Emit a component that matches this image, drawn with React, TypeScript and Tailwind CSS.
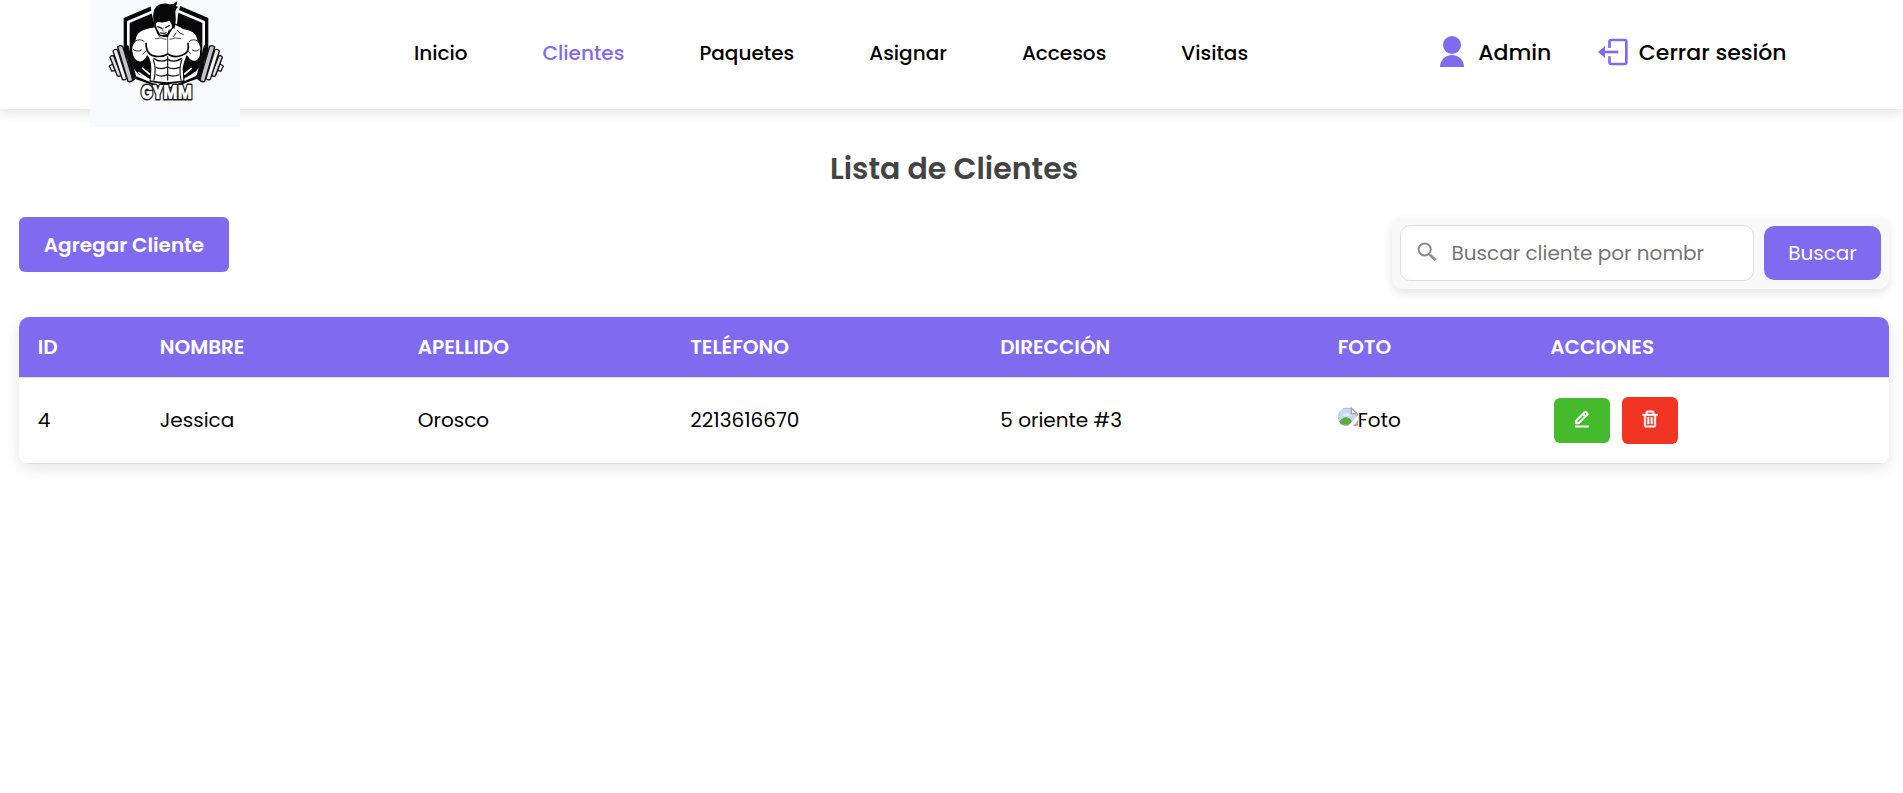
import type { ReactNode } from "react";
import { BiEditAlt, BiTrash } from "react-icons/bi";

function Logo() {
  return (
    <svg viewBox="30 0 450 381" className="block h-[127px] w-[150px] bg-[#f9fafe]" role="img" aria-label="GYMM">
      <g strokeLinejoin="round" strokeLinecap="round">
        {/* shield */}
        <path d="M131 54 L258 0 L385 54 V190 L352 236 L258 270 L164 236 L131 190 Z" fill="#080808" />
        <path d="M145 66 L258 18 L371 66 V190 L344 226 L258 262 L172 226 L145 190 Z" fill="none" stroke="#fbfbff" strokeWidth="8" />
        <path d="M208 -4 H306 L294 44 L290 82 L226 84 L216 44 Z" fill="#f9fafe" />
        {/* left barbell plates */}
        <g stroke="#111" strokeWidth="4">
          <path d="M88 198 L98 192 L106 212 L95 213 Z" fill="#fff" />
          <path d="M90 172 Q92 165 101 168 L124 224 Q120 231 112 228 Z" fill="#ddd" />
          <path d="M99 153 Q103 146 112 149 L140 235 Q135 242 127 238 Z" fill="#f4f4f4" />
          <path d="M113 141 Q119 134 128 139 L159 240 Q153 248 144 244 Z" fill="#c4c4c8" />
          <path d="M135 139 Q138 133 144 139 L167 232 Q163 242 158 239 Z" fill="#0b0b0b" />
        </g>
        {/* right barbell plates */}
        <g stroke="#111" strokeWidth="4">
          <path d="M430 198 L420 192 L412 212 L423 213 Z" fill="#fff" />
          <path d="M427 172 Q425 165 416 168 L394 224 Q398 231 406 228 Z" fill="#ddd" />
          <path d="M418 153 Q414 146 405 149 L378 235 Q383 242 391 238 Z" fill="#f4f4f4" />
          <path d="M404 141 Q398 134 389 139 L359 240 Q365 248 374 244 Z" fill="#c4c4c8" />
          <path d="M382 139 Q379 133 373 139 L351 232 Q355 242 360 239 Z" fill="#0b0b0b" />
        </g>
        {/* torso and arms */}
        <path
          d="M226 80 Q208 82 190 88 Q166 96 164 124 Q150 142 156 158 Q158 182 180 187 Q195 184 202 168 Q212 184 212 206 L210 243 Q260 254 312 243 L310 206 Q314 184 321 168 Q330 186 346 184 Q364 178 362 154 Q366 140 355 124 Q352 98 330 90 Q308 86 294 76 L280 70 L262 110 L236 104 Z"
          fill="#fff"
          stroke="#090909"
          strokeWidth="4"
        />
        <path d="M202 168 L213 192 L211 225 L180 202 Q197 188 202 168 Z M321 168 L311 192 L313 225 L340 201 Q324 187 321 168 Z" fill="#090909" />
        {/* chest */}
        <path d="M198 130 Q198 160 218 167 Q246 174 263 162 Q282 175 306 166 Q330 158 324 130" fill="none" stroke="#080808" strokeWidth="5" />
        <path d="M263 112 V162 M226 116 Q242 110 258 118 M270 118 Q286 110 302 116" fill="none" stroke="#333" strokeWidth="2.5" />
        <path d="M164 124 Q180 114 192 124 M355 124 Q340 114 328 124 M160 148 Q170 158 184 150 M358 148 Q350 158 337 150 M190 162 L199 152 M332 162 L323 152" fill="none" stroke="#333" strokeWidth="3" />
        <path d="M292 92 Q298 100 310 104 M240 110 L232 99 M281 109 L288 99" fill="none" stroke="#222" strokeWidth="3" />
        {/* abdomen */}
        <path d="M222 176 Q242 190 263 178 Q282 190 304 176 M228 202 Q246 210 262 201 Q278 210 298 202 M230 225 Q246 232 262 224 Q278 232 296 225" fill="none" stroke="#111" strokeWidth="4" />
        <path d="M263 170 V240 M220 180 Q230 206 222 240 M305 180 Q296 206 303 240" fill="none" stroke="#161616" strokeWidth="3.5" />
        <path d="M176 218 L207 239 M188 205 L208 222 M345 218 L316 239 M334 205 L314 222" stroke="#fff" strokeWidth="5" />
        {/* head */}
        <path d="M224 58 Q223 86 241 106 Q256 110 268 98 L282 76 L280 50 Z" fill="#fff" stroke="#090909" strokeWidth="4" />
        <path d="M221 66 Q213 20 244 12 Q256 8 270 13 Q282 14 292 3 Q292 13 287 18 L295 20 Q286 26 286 35 Q290 60 284 86 L277 84 Q276 70 268 62 Q252 70 236 66 Q228 66 227 78 Z" fill="#080808" />
        <path d="M233 80 L246 85 M256 83 L269 76 M242 98 Q250 102 258 98 M268 90 L262 106 Q252 112 244 106" fill="none" stroke="#080808" strokeWidth="3.5" />
        <path d="M250 84 L247 92 L252 93" fill="none" stroke="#333" strokeWidth="2" />
      </g>
      <text
        x="183"
        y="298"
        textLength="153"
        lengthAdjust="spacingAndGlyphs"
        fill="#fff"
        stroke="#1b1b1b"
        strokeWidth="9"
        paintOrder="stroke"
        strokeLinejoin="round"
        className="font-['Poppins',sans-serif] text-[55px] font-extrabold"
      >
        GYMM
      </text>
    </svg>
  );
}

function UserIcon() {
  return (
    <svg viewBox="0 0 24 31" className="mb-[2px] h-[31px] w-6 fill-[#806af0]">
      <circle cx="12" cy="9" r="9" />
      <path d="M0 31a12 12 0 0 1 24 0Z" />
    </svg>
  );
}

function LogoutIcon() {
  return (
    <svg viewBox="595 56 90 84" className="h-7 w-[30px]">
      <path d="M629.5 86V67q0-5 5-5H675q5 0 5 5V129q0 5-5 5H634.5q-5 0-5-5V111" fill="none" stroke="#806af0" strokeWidth="8" />
      <path d="M610 98H656" stroke="#806af0" strokeWidth="8" />
      <path d="M595 98L616 80V116Z" fill="#806af0" />
    </svg>
  );
}

function SearchIcon() {
  return (
    <svg viewBox="0 0 20 20" className="mb-[3px] h-5 w-5" fill="none">
      <circle cx="7.7" cy="7.5" r="6.1" stroke="#8a8c8b" strokeWidth="2" />
      <path d="M11.8 11.8L14 14" stroke="#8a8c8b" strokeWidth="1.8" />
      <path d="M13.3 13.2L18.6 18.2" stroke="#929090" strokeWidth="2.8" />
    </svg>
  );
}

function BrokenImage() {
  return (
    <svg viewBox="0 0 60 60" className="mb-[6px] h-5 w-5 overflow-hidden rounded-[10px_0_0_10px]">
      <path d="M2 4H40L58 22V54H2Z" fill="#c3d9f7" />
      <path d="M2 54V4H40" fill="none" stroke="#c0c0c0" strokeWidth="4" />
      <path d="M12 27q1-8 9-7q7-6 12 1q7 2 4 7Z" fill="#dfeafb" />
      <path d="M2 54V46Q17 27 30 32Q40 34 46 54Z" fill="#58ad3b" />
      <path d="M2 54H58V22" fill="none" stroke="#a3a3a3" strokeWidth="4" />
      <path d="M27 60L60 25V39L41 60Z" fill="#fff" />
      <path d="M40 3V20H58Z" fill="#fff" stroke="#a3a3a3" strokeWidth="3.5" />
    </svg>
  );
}

const nav = ["Inicio", "Clientes", "Paquetes", "Asignar", "Accesos", "Visitas"];

const columns = [
  { label: "ID", width: "w-[122px]" },
  { label: "NOMBRE", width: "w-[258px]" },
  { label: "APELLIDO", width: "w-[272.5px]" },
  { label: "TELÉFONO", width: "w-[310px]" },
  { label: "DIRECCIÓN", width: "w-[337.5px]" },
  { label: "FOTO", width: "w-[212.5px]" },
  { label: "ACCIONES", width: "w-[357.5px]" },
];

function Cell({ children, className = "pb-[2px]" }: { children: ReactNode; className?: string }) {
  return <td className={`h-[86px] border-b border-[#ddd] pl-[18.75px] align-middle ${className}`}>{children}</td>;
}

export default function App() {
  return (
    <div className="min-h-[793px] w-full bg-white font-['Poppins','Inter',sans-serif] text-xl text-black">
      <header className="flex h-[109px] items-start bg-white pl-[90px] shadow-[0_5px_10px_rgba(0,0,0,0.1)]">
        <div className="relative z-10 shrink-0">
          <Logo />
        </div>
        <nav className="ml-[174px] flex h-[106px] items-center gap-[75px] font-medium">
          {nav.map((n) => (
            <a key={n} className={n === "Clientes" ? "text-[#806af0]" : ""}>
              {n}
            </a>
          ))}
        </nav>
        <div className="ml-[191.5px] flex h-[105px] items-center text-[22px] font-medium">
          <div className="flex items-center">
            <UserIcon />
            <span className="ml-[14.5px] pt-px">Admin</span>
          </div>
          <div className="ml-[47px] flex items-center">
            <LogoutIcon />
            <span className="ml-[10.5px] whitespace-nowrap pt-px">Cerrar sesión</span>
          </div>
        </div>
      </header>

      <main className="pl-[19px] pr-[14px]">
        <h1 className="mt-[29px] flex h-[61px] items-center justify-center text-[30px] font-semibold text-[#444]">
          Lista de Clientes
        </h1>

        <div className="mt-[18px] flex items-start justify-between">
          <button className="flex h-[55px] w-[210px] items-center justify-center rounded-md bg-[#806af0] font-semibold text-white">
            Agregar Cliente
          </button>
          <div className="flex h-[72px] w-[497px] items-center rounded-[10px] bg-[#f9f9f9] px-2 shadow-[0_4px_10px_rgba(0,0,0,0.1)]">
            <div className="flex h-14 w-[354px] items-center rounded-[10px] border border-[#ddd] bg-white pl-4 text-[#757575]">
              <SearchIcon />
              <span className="ml-[14.5px] whitespace-nowrap">Buscar cliente por nombr</span>
            </div>
            <button className="ml-[10px] flex h-[54px] w-[117px] items-center justify-center rounded-[10px] bg-[#806af0] text-white">
              Buscar
            </button>
          </div>
        </div>

        <div className="mt-7 w-[1870px] overflow-hidden rounded-[10px] shadow-[0_4px_15px_rgba(0,0,0,0.1)]">
          <table className="w-full table-fixed border-separate border-spacing-0 text-left">
            <thead>
              <tr className="bg-[#806af0] text-white">
                {columns.map((c) => (
                  <th key={c.label} className={`h-[61px] border-b border-[#ddd] pb-px pl-[18.75px] font-semibold ${c.width}`}>
                    {c.label}
                  </th>
                ))}
              </tr>
            </thead>
            <tbody>
              <tr className="bg-white">
                <Cell>4</Cell>
                <Cell>Jessica</Cell>
                <Cell>Orosco</Cell>
                <Cell>2213616670</Cell>
                <Cell>5 oriente #3</Cell>
                <Cell>
                  <div className="flex items-center">
                    <BrokenImage />
                    Foto
                  </div>
                </Cell>
                <Cell className="pb-0">
                  <div className="flex items-center gap-3 pl-[3.5px]">
                    <button className="flex h-[45px] w-14 items-center justify-center rounded-md bg-[#45ba2c] pb-1 text-white">
                      <BiEditAlt size={20} stroke="currentColor" strokeWidth={0.5} />
                    </button>
                    <button className="flex h-[47px] w-14 items-center justify-center rounded-md bg-[#f23422] pb-1 text-white">
                      <BiTrash size={20} stroke="currentColor" strokeWidth={0.5} />
                    </button>
                  </div>
                </Cell>
              </tr>
            </tbody>
          </table>
        </div>
      </main>
    </div>
  );
}
